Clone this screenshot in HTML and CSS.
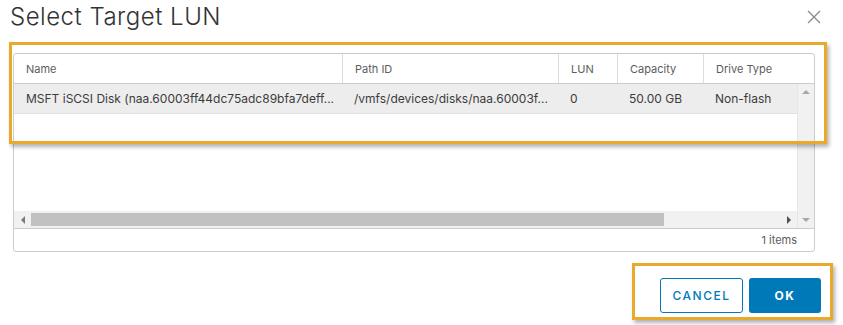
FILE: index.html
```html
<!DOCTYPE html>
<html lang="en">

<head>
    <meta charset="UTF-8">
    <meta name="viewport" content="width=device-width, initial-scale=1.0">
    <title>Select Target LUN</title>
    <link rel="stylesheet" href="styles.css">
</head>

<body>

    <div class="dialog">
        <div class="dialog-header">
            <h3 class="dialog-title">Select Target LUN</h3>
            <button class="close" aria-label="Close">
                <svg width="14" height="14" viewBox="0 0 14 14">
                    <path d="M1 1 L13 13 M13 1 L1 13" stroke="#8a8a8a" stroke-width="1.3" fill="none" />
                </svg>
            </button>
        </div>

        <div class="datagrid">
            <div class="dg-head">
                <div class="cell col-name">Name</div>
                <div class="cell col-path">Path ID</div>
                <div class="cell col-lun">LUN</div>
                <div class="cell col-cap">Capacity</div>
                <div class="cell col-type">Drive Type</div>
            </div>
            <div class="dg-body">
                <div class="dg-rows">
                    <div class="dg-row selected">
                        <div class="cell col-name">MSFT iSCSI Disk (naa.60003ff44dc75adc89bfa7deff...</div>
                        <div class="cell col-path">/vmfs/devices/disks/naa.60003f...</div>
                        <div class="cell col-lun">0</div>
                        <div class="cell col-cap">50.00 GB</div>
                        <div class="cell col-type">Non-flash</div>
                    </div>
                </div>
                <div class="vscroll">
                    <span class="arrow up"></span>
                    <span class="arrow down"></span>
                </div>
                <div class="hscroll">
                    <span class="hbtn"><span class="arrow left"></span></span>
                    <span class="thumb"></span>
                    <span class="hbtn right-btn"><span class="arrow right"></span></span>
                </div>
            </div>
            <div class="dg-footer">1 items</div>
        </div>

        <div class="dialog-footer">
            <button class="btn btn-outline">CANCEL</button>
            <button class="btn btn-primary">OK</button>
        </div>

        <!-- annotation highlights -->
        <div class="highlight hl-grid"></div>
        <div class="highlight hl-buttons"></div>
    </div>

</body>

</html>
```

FILE: styles.css
```css
body {
    font-family: Inter, 'Open Sans', sans-serif;
    background-color: #fff;
    margin: 0;
    padding: 0;
}

.dialog {
    position: relative;
    width: 843px;
    height: 325px;
}

.dialog-header {
    display: flex;
    justify-content: space-between;
    align-items: flex-start;
    padding: 0 22px 0 10px;
    height: 53px;
}

.dialog-title {
    margin: 0;
    font-size: 24px;
    line-height: 34px;
    font-weight: 300;
    letter-spacing: 0.5px;
    color: #333;
}

.close {
    background: none;
    border: none;
    padding: 0;
    margin-top: 10px;
    width: 14px;
    height: 14px;
    cursor: pointer;
}

/* datagrid */

.datagrid {
    margin: 0 28px 0 13px;
    border: 1px solid #ccc;
    border-radius: 3px;
    color: #5c5c5c;
}

.dg-head,
.dg-row {
    display: flex;
}

.dg-head {
    height: 29px;
    border-bottom: 1px solid #ccc;
    font-size: 11px;
}

.dg-head .cell {
    border-left: 1px solid #ddd;
}

.dg-head .cell:first-child {
    border-left: none;
}

.cell {
    display: flex;
    align-items: center;
    padding-left: 12px;
    box-sizing: border-box;
    white-space: nowrap;
    overflow: hidden;
}

.col-name { width: 328px; }
.col-path { width: 216px; }
.col-lun { width: 59px; }
.col-cap { width: 86px; }
.col-type { flex: 1; }

.dg-body {
    display: grid;
    grid-template-columns: 1fr 17px;
    grid-template-rows: 127px 17px;
}

.dg-rows {
    overflow: hidden;
}

.dg-row {
    height: 29px;
    border-bottom: 1px solid #e0e0e0;
    font-size: 12px;
    color: #3c3c3c;
}

.dg-row.selected {
    background-color: #ededed;
}

.vscroll {
    grid-row: 1 / 3;
    grid-column: 2;
    background-color: #f1f1f1;
    border-left: 1px solid #e6e6e6;
    position: relative;
}

.hscroll {
    display: flex;
    align-items: center;
    background-color: #f1f1f1;
}

.hbtn {
    width: 17px;
    height: 17px;
    display: flex;
    align-items: center;
    justify-content: center;
}

.right-btn {
    margin-left: auto;
}

.thumb {
    width: 633px;
    height: 13px;
    background-color: #c1c1c1;
}

.arrow {
    width: 0;
    height: 0;
    border-style: solid;
}

.arrow.up,
.arrow.down {
    position: absolute;
    left: 4px;
}

.arrow.up {
    top: 6px;
    border-width: 0 4px 4px 4px;
    border-color: transparent transparent #a8a8a8 transparent;
}

.arrow.down {
    bottom: 6px;
    border-width: 4px 4px 0 4px;
    border-color: #a8a8a8 transparent transparent transparent;
}

.arrow.left {
    border-width: 4px 4px 4px 0;
    border-color: transparent #7a7a7a transparent transparent;
}

.arrow.right {
    border-width: 4px 0 4px 4px;
    border-color: transparent transparent transparent #505050;
}

.dg-footer {
    height: 22px;
    border-top: 1px solid #ccc;
    display: flex;
    align-items: center;
    justify-content: flex-end;
    padding-right: 17px;
    font-size: 11px;
}

/* buttons */

.dialog-footer {
    display: flex;
    justify-content: flex-end;
    gap: 6px;
    padding: 26px 22px 0 0;
}

.btn {
    height: 35px;
    border-radius: 3px;
    font-family: Inter, sans-serif;
    font-size: 12px;
    font-weight: 500;
    letter-spacing: 1.5px;
    cursor: pointer;
}

.btn-outline {
    width: 83px;
    background-color: #fff;
    border: 1px solid #0079b8;
    color: #0079b8;
}

.btn-primary {
    width: 72px;
    background-color: #0079b8;
    border: none;
    color: #fff;
    font-weight: 700;
}

/* orange annotation boxes */

.highlight {
    position: absolute;
    border: 3px solid #e9a92b;
    box-shadow: 2px 3px 4px rgba(0, 0, 0, 0.3);
    box-sizing: border-box;
    pointer-events: none;
}

.hl-grid {
    left: 9px;
    top: 42px;
    width: 818px;
    height: 102px;
}

.hl-buttons {
    left: 632px;
    top: 263px;
    width: 201px;
    height: 57px;
}
```
